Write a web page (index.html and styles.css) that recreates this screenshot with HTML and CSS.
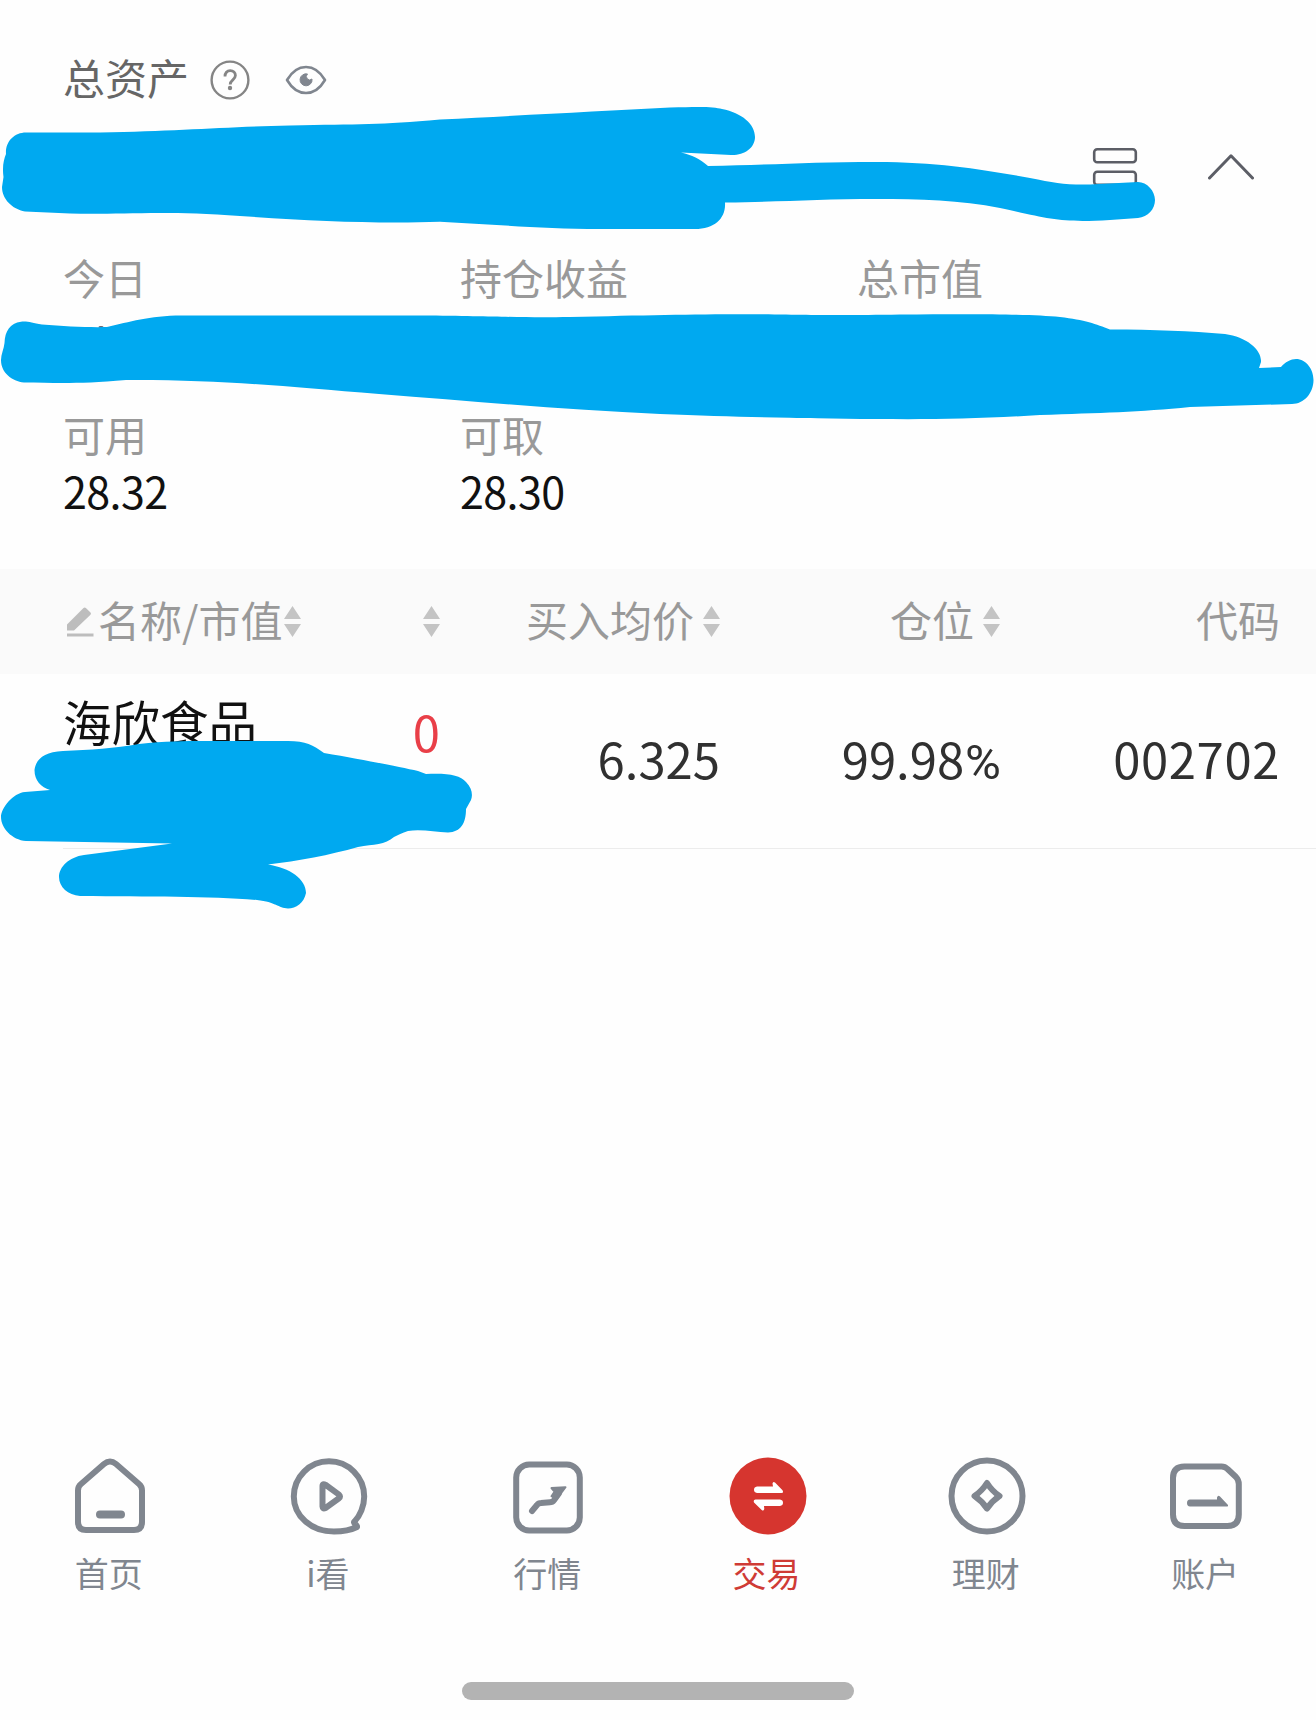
FILE: index.html
```html
<!DOCTYPE html>
<html lang="zh-CN">
<head>
    <meta charset="UTF-8">
    <meta name="viewport" content="width=device-width, initial-scale=1.0">
    <title>交易</title>
    <link rel="stylesheet" href="styles.css">
</head>
<body>
    <div class="page">
        <div class="assets">
            <div class="title">
                <span>总资产</span>
                <svg class="help" width="40" height="40" viewBox="0 0 40 40" fill="none" stroke="#858585" stroke-width="2.400">
                    <circle cx="20" cy="20" r="18.400"/>
                    <path d="M15 16.500c0-3.500 2-5.800 5.200-5.800s5.200 2 5.200 4.900c0 4.300-5.200 4.300-5.200 8.900" stroke-width="2.800"/>
                    <circle cx="20" cy="28" r="2.200" fill="#858585" stroke="none"/>
                </svg>
                <svg class="eye" width="42" height="30" viewBox="0 0 42 30">
                    <path d="M2 15C7 6.500 13 2 21 2s14 4.500 19 13c-5 8.500-11 13-19 13S7 23.500 2 15z" fill="none" stroke="#80868f" stroke-width="2.600" stroke-linejoin="round"/>
                    <path d="M22.500 9a6 6 0 1 0 4.500 5 3 3 0 0 1-4.500-5z" fill="#80868f" stroke="#80868f"/>
                </svg>
            </div>
            <div class="tools">
                <svg width="46" height="48" viewBox="0 0 46 48" fill="none" stroke="#5c5e66" stroke-width="2.600">
                    <rect x="2.200" y="2.200" width="41.600" height="13" rx="3"/>
                    <rect x="2.200" y="24.700" width="41.600" height="13" rx="3"/>
                </svg>
                <svg width="46" height="26" viewBox="0 0 46 26" fill="none" stroke="#5c5e66" stroke-width="3" stroke-linecap="round" stroke-linejoin="round">
                    <path d="M1.500 24L23 1.800 44.500 24"/>
                </svg>
            </div>
            <div class="stats">
                <div class="stat"><span class="label">今日</span></div>
                <div class="stat"><span class="label">持仓收益</span></div>
                <div class="stat"><span class="label">总市值</span></div>
                <div class="stat"><span class="label">可用</span><span class="value">28.32</span></div>
                <div class="stat"><span class="label">可取</span><span class="value">28.30</span></div>
            </div>
        </div>

        <div class="row head">
            <div class="cell first">
                <svg class="pencil" width="28" height="30" viewBox="0 0 28 30" fill="#bdbdbd">
                    <path d="M1 23.500V17.500L17.500 1q1.200-1 2.400 0L24.500 5.500q1 1 0 2.200L8 23.500zM1 26.500h26.500v3H1z"/>
                </svg>
                <span>名称/市值</span>
                <svg class="sort" width="17" height="31" viewBox="0 0 17 31"><path d="M8.500 0L17 13H0zM0 18h17L8.500 31z"/></svg>
            </div>
            <div class="cell">
                <svg class="sort" width="17" height="31" viewBox="0 0 17 31"><path d="M8.500 0L17 13H0zM0 18h17L8.500 31z"/></svg>
            </div>
            <div class="cell">
                <span>买入均价</span>
                <svg class="sort" width="17" height="31" viewBox="0 0 17 31"><path d="M8.500 0L17 13H0zM0 18h17L8.500 31z"/></svg>
            </div>
            <div class="cell">
                <span>仓位</span>
                <svg class="sort" width="17" height="31" viewBox="0 0 17 31"><path d="M8.500 0L17 13H0zM0 18h17L8.500 31z"/></svg>
            </div>
            <div class="cell code-head"><span>代码</span></div>
        </div>

        <div class="row item">
            <div class="cell name">海欣食品</div>
            <div class="cell profit">0</div>
            <div class="cell">6.325</div>
            <div class="cell"><span>99.98<span class="percent">%</span></span></div>
            <div class="cell code">002702</div>
        </div>

        <div class="tabbar">
            <div class="tab">
                <svg width="80" height="80" viewBox="0 0 80 80">
                    <path d="M8 35.500q0-4 3-6.500L34 9q6-5 12 0l23 20q3 2.500 3 6.500v31.500q0 8-8 8H16q-8 0-8-8z"/>
                    <path d="M30 59.500h21" stroke-width="8"/>
                </svg>
                <span>首页</span>
            </div>
            <div class="tab">
                <svg width="80" height="80" viewBox="0 0 80 80">
                    <path d="M65.500 66.500C71 61 75.200 51 75.200 41.500a35.200 35.200 0 1 0-70.400 0C4.800 61 22 76.500 45 76.500c9 0 17-1.500 23-4.500.8-2-4.500-4-2.500-5.500z"/>
                    <path d="M33.500 31q0-3 3-1.200l13.500 9.800q2 1.900 0 3.600l-13.500 9.800q-3 1.500-3-1.500z"/>
                </svg>
                <span>i看</span>
            </div>
            <div class="tab">
                <svg width="80" height="80" viewBox="0 0 80 80">
                    <rect x="8.200" y="9.500" width="63.600" height="66" rx="13"/>
                    <path d="M24 56l5-6q1.500-2 4-2l9-.8q2.500 0 4-2l5-7"/>
                    <path d="M43.500 33l14-.8-9 12-5-3 3-4.500z" stroke-width="2" fill="#80868f"/>
                </svg>
                <span>行情</span>
            </div>
            <div class="tab active">
                <svg width="80" height="80" viewBox="0 0 80 80">
                    <circle cx="40" cy="41" r="38.500" fill="#d6352f" stroke="none"/>
                    <path d="M29 31.500h16l-.5-3q.5-2.500 2.500-1l7.500 7.800q1.500 2.700-1 2.700H29q-3-.5-3-3.200t3-3.300zM52 51H36l.3 3q-.8 2.500-2.600 1L26 47.500q-1-3 1.500-3H52q3 .5 3 3.200T52 51z" fill="#fff" stroke="none"/>
                </svg>
                <span>交易</span>
            </div>
            <div class="tab">
                <svg width="80" height="80" viewBox="0 0 80 80">
                    <circle cx="40" cy="41" r="35.500"/>
                    <path d="M40 28q5 8 12.500 13Q45 46 40 53.500 35 46 27.500 41 35 36 40 28z"/>
                </svg>
                <span>理财</span>
            </div>
            <div class="tab">
                <svg width="80" height="80" viewBox="0 0 80 80">
                    <path d="M18.500 11.500h37q3.500 0 6 2.500l8.500 8q2.800 3 2.800 7V59.500q0 11.500-11.500 11.500H18.500Q7 71 7 59.500V23Q7 11.500 18.500 11.500z"/>
                    <path d="M24 44.500h27v-2q1-3 3-1l8 8.500q.5 1.500-1 1.500H24q-3-.3-3-3.500t3-3.500z" fill="#80868f" stroke="none"/>
                </svg>
                <span>账户</span>
            </div>
        </div>
        <div class="home-bar"></div>

        <!-- marker strokes hiding the amounts -->
        <svg class="marker" width="1316" height="1720" viewBox="0 0 1316 1720">
            <path d="M26 132.500H100C180 131 220 127 290 125.500S380 125 440 119.500C530 115 600 111 670 107.500C700 106.500 714 106.500 722 109C742 113 755 124 755 137C755 148 744 155.500 731 155L681 152.500C692 155 700 159 708 166C770 165 810 162 876 162C940 162 985 170 1030 178C1055 183 1065 185 1090 184.500L1138 182C1147 182 1155 191 1155 200C1155 209 1148 217 1138 218L1110 220C1060 223 1050 219 1000 208C960 200 920 199 876 199C820 199 780 202 725 202.500C726 218 715 229 695 229H600C540 229 490 224 440 221.700C380 224 310 221 240 216C160 210 120 215 70 213.500L25 211.500C12 209 2 199 2 187L3.500 177C2 166 4 159 6 154C5 142 14 132.500 26 132.500z"/>
            <ellipse cx="101" cy="327" rx="2.500" ry="1" fill="#65606c"/>
            <path d="M21 321.700C28 321 32 323 42 324.500C65 326.500 90 327.500 107 327C130 322 148 315.700 182 315.500H421C500 316 520 318 570 317C650 315 700 314 760 314.200C820 315 840 315.500 900 314.500C980 314 1030 314 1060 317C1085 320 1096 324 1110 329.500C1155 329.500 1190 331 1225 334C1247 337 1262 350 1261 362L1259 368L1281 367C1285 362 1291 359 1296 359C1306 359 1313.500 369 1313.500 380C1313.500 393 1304 404 1292 404L1190 407C1140 412 1100 413 1040 415C980 419 930 419.500 876 419C800 418.500 740 417 660 414C570 410 480 402 379 394C280 386 220 379.500 126 380C80 384 60 383 24 382.500C12 381 1 373 1 360C1 354 4 349 4.500 343C5 331 10 323 21 321.700z"/>
            <path d="M63 751C90 750 115 748 139 744C165 741 185 741 202 741H288C306 741 313 745 324 753C365 760 400 767 418 771L426 774C448 773 460 775 466 782C472 788 473 795 471 800L466 809C466 823 461 832 448 832.500C435 832 421 829 408 831C402 833 398 835 394 837C385 845 374 844 358 847C330 855 298 861 268 864.500C290 868 306 879 306 893C304 903 296 908.500 288 908.500C278 908 276 902 257 900C210 896 150 897 80 896C68 895 59 887 59 877C59 867 69 857 84 855L172 843.500L26 841C12 840 1 828 1 817C1 808 13 793 25 792L50 790C41 787 34.500 781 34.500 770C36 759 44 752 63 751z"/>
        </svg>
    </div>
</body>
</html>
```
FILE: styles.css
```css
body {
    margin: 0;
    background-color: #fefefe;
    font-family: "Noto Sans CJK SC", sans-serif;
}
svg {
    display: block;
    flex-shrink: 0;
}
.page {
    position: relative;
    width: 1316px;
    height: 1720px;
    box-sizing: border-box;
    display: flex;
    flex-direction: column;
    overflow: hidden;
}
.assets {
    height: 569px;
    box-sizing: border-box;
    padding: 47px 62px 0 63px;
}
.title {
    display: flex;
    align-items: center;
    height: 60px;
    font-size: 42px;
    line-height: 60px;
    color: #666;
}
.title .help {
    margin: 6px 0 0 21px;
}
.title .eye {
    margin: 6px 0 0 34.5px;
}
.tools {
    display: flex;
    justify-content: flex-end;
    align-items: flex-start;
    gap: 70px;
    height: 109px;
    padding-top: 40px;
    box-sizing: border-box;
}
.tools svg + svg {
    margin-top: 7px;
}
.stats {
    display: grid;
    grid-template-columns: repeat(3, 397px);
    grid-template-rows: 157px auto;
    padding-top: 31px;
}
.stat {
    display: flex;
    flex-direction: column;
}
.label {
    font-size: 42px;
    line-height: 60px;
    color: #999;
}
.value {
    font-size: 43px;
    line-height: 52px;
    letter-spacing: -0.6px;
    color: #111;
}
.row {
    display: grid;
    grid-template-columns: 240px 137px 280px 280px 279px;
    padding: 0 37px 0 63px;
}
.cell {
    display: flex;
    justify-content: flex-end;
    align-items: center;
}
.head {
    height: 105px;
    background-color: #fafafa;
    font-size: 42px;
    color: #999;
}
.head span {
    line-height: 60px;
    padding-bottom: 6px;
}
.head .first {
    justify-content: flex-start;
}
.head .code-head {
    margin-right: -1px;
}
.pencil {
    margin: 0 4px 0 3px;
}
.sort {
    margin-left: 9px;
    fill: #c4c4c4;
}
.first .sort {
    margin-left: 2px;
}
.item {
    position: relative;
    height: 174px;
    font-size: 49px;
    line-height: 168px;
    color: #303030;
}
.item::after {
    content: "";
    position: absolute;
    left: 63px;
    right: 0;
    bottom: -1px;
    height: 1px;
    background-color: #ececec;
}
.item .cell {
    align-items: flex-start;
}
.item .name {
    justify-content: flex-start;
    font-size: 48.5px;
    line-height: 95px;
    color: #111;
}
.item .profit {
    line-height: 113px;
    color: #e93f48;
}
.percent {
    margin-left: 1px;
    margin-right: -1px;
    font-family: Roboto, sans-serif;
    line-height: 1;
}
.code {
    letter-spacing: 0.6px;
    margin-right: -1px;
}
.tabbar {
    display: grid;
    grid-template-columns: repeat(6, 219.3px);
    height: 165px;
    margin-top: auto;
}
.tab {
    display: flex;
    flex-direction: column;
    align-items: center;
    font-size: 34px;
    line-height: 50px;
    color: #80868f;
}
.tab svg {
    fill: none;
    stroke: #80868f;
    stroke-width: 6;
    stroke-linecap: round;
    stroke-linejoin: round;
}
.tab span {
    margin-top: 13px;
    margin-right: 2px;
}
.active {
    color: #cf3b35;
}
.home-bar {
    width: 392px;
    height: 18px;
    margin: 62px auto 20px;
    border-radius: 9px;
    background-color: #b3b3b3;
}
.marker {
    position: absolute;
    left: 0;
    top: 0;
    fill: #00a9f0;
}
```
